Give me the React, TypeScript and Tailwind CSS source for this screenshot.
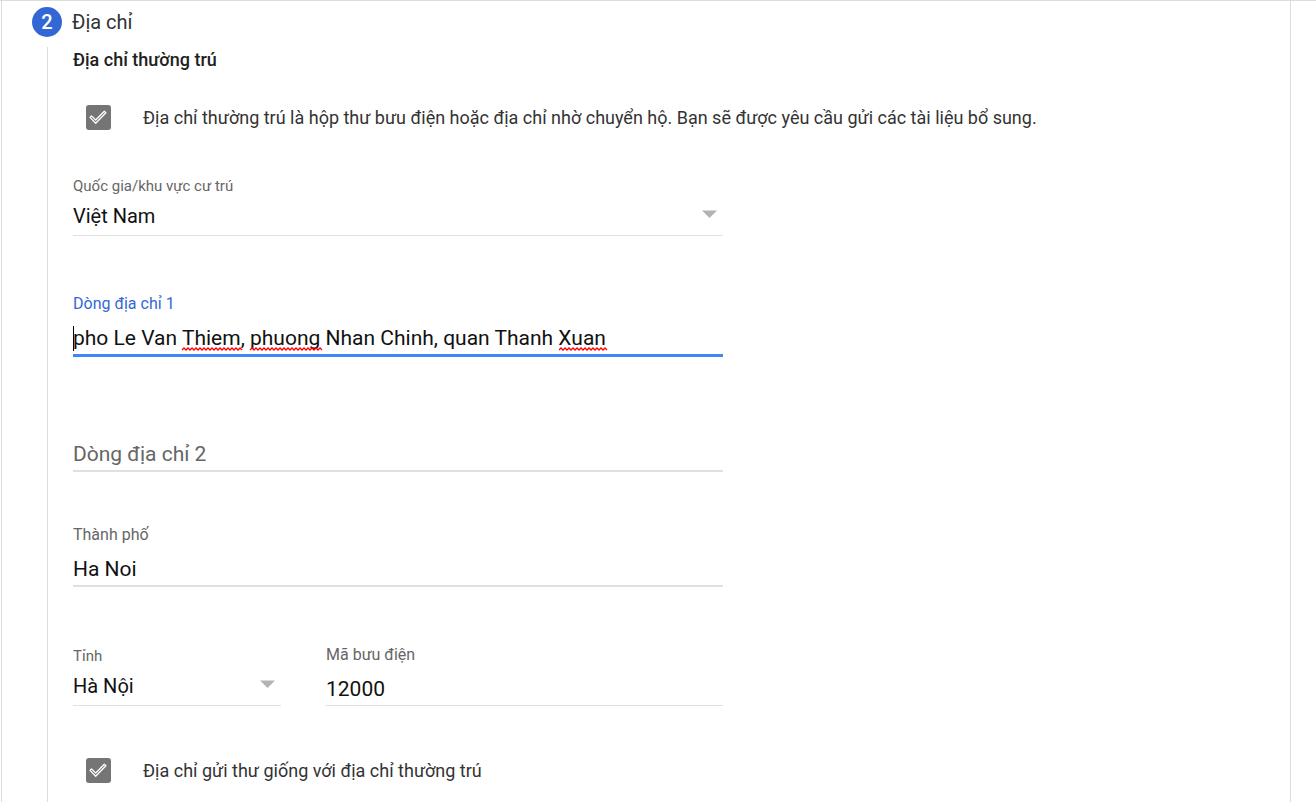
import { useState } from "react";
import clsx from "clsx";

type SelectFieldProps = {
    id: string;
    label: string;
    options: string[];
    className?: string;
};

function SelectField({ id, label, options, className }: SelectFieldProps) {
    return (
        <div className={className}>
            <label htmlFor={id} className="block text-[15px] leading-5 text-[#666]">
                {label}
            </label>
            <div className="relative">
                <select
                    id={id}
                    className="block h-10 w-full appearance-none border-b border-[#e0e0e0] bg-transparent pr-8 text-[20px] text-[#111] outline-none"
                >
                    {options.map((option) => (
                        <option key={option}>{option}</option>
                    ))}
                </select>
                <svg
                    viewBox="0 0 16 8"
                    className="pointer-events-none absolute top-3.5 right-[5px] h-2 w-4"
                    aria-hidden="true"
                >
                    <path d="M0 0.5h15l-7.5 7.5z" fill="#b3b3b3" />
                </svg>
            </div>
        </div>
    );
}

type CheckFieldProps = {
    id: string;
    label: string;
    className?: string;
};

function CheckField({ id, label, className }: CheckFieldProps) {
    const [checked, setChecked] = useState(true);

    return (
        <div className={clsx("flex items-center gap-8 pl-[13px]", className)}>
            <div className="relative h-[25px] w-[25px] shrink-0">
                <input
                    id={id}
                    type="checkbox"
                    checked={checked}
                    onChange={(e) => setChecked(e.target.checked)}
                    className="block h-full w-full appearance-none rounded-[3px] border-2 border-[#757575] checked:bg-[#757575]"
                />
                {checked && (
                    <svg
                        viewBox="0 0 25 25"
                        className="pointer-events-none absolute inset-0 h-full w-full"
                        aria-hidden="true"
                    >
                        <path
                            d="M4 12.4 5.5 10.9 9.7 15 18.3 6.2 19.9 7.8 9.7 18.2z"
                            fill="none"
                            stroke="#fff"
                            strokeWidth="1.3"
                            strokeLinejoin="round"
                        />
                    </svg>
                )}
            </div>
            <label htmlFor={id} className="text-[18px] leading-[25px] text-[#333]">
                {label}
            </label>
        </div>
    );
}

// wavy line of the spell checker, one wave every 4px
function wave(from: number, to: number) {
    let d = `M${from} 28`;
    for (let x = from; x < to; x += 4) {
        d += "l2 -2l2 2";
    }
    return d;
}

const misspelled = [
    [109, 168],
    [177, 247],
    [486, 533],
];

const inputClass = "block h-8 w-full bg-transparent text-[21px] text-[#111] outline-none placeholder:text-[#666] placeholder:opacity-100";

export default function App() {
    const [line1, setLine1] = useState("pho Le Van Thiem, phuong Nhan Chinh, quan Thanh Xuan");
    const [touched, setTouched] = useState(false);

    return (
        <div className="flex min-h-screen flex-col border-t border-[#dadce0] bg-white font-[Roboto,sans-serif]">
            <main className="mr-[25px] ml-px flex flex-1 flex-col border-x border-[#dadce0] pl-[30px]">
                <header className="flex items-center gap-2.5 pt-1.5">
                    <span className="flex h-[30px] w-[30px] items-center justify-center rounded-full bg-[#3367d6] text-[20px] font-medium text-white">
                        2
                    </span>
                    <h1 className="text-[20px] leading-[30px] text-[#333]">Địa chỉ</h1>
                </header>

                <form className="mt-2.5 ml-[15px] flex-1 border-l border-[#dadce0] pl-[25px]">
                    <h2 className="text-[18px] leading-[26px] font-medium text-[#212121]">Địa chỉ thường trú</h2>

                    <CheckField
                        id="po-box"
                        label="Địa chỉ thường trú là hộp thư bưu điện hoặc địa chỉ nhờ chuyển hộ. Bạn sẽ được yêu cầu gửi các tài liệu bổ sung."
                        className="mt-8"
                    />

                    <div className="max-w-[650px]">
                        <SelectField
                            id="country"
                            label="Quốc gia/khu vực cư trú"
                            options={["Việt Nam"]}
                            className="mt-[46px] mb-[58px]"
                        />

                        {/* Address line 1, focused */}
                        <div>
                            <label htmlFor="line1" className="mb-2 block text-[16px] leading-5 text-[#3367d6]">
                                Dòng địa chỉ 1
                            </label>
                            <div className="relative border-b-3 border-[#4285f4]">
                                <input
                                    id="line1"
                                    type="text"
                                    value={line1}
                                    spellCheck={false}
                                    onChange={(e) => {
                                        setLine1(e.target.value);
                                        setTouched(true);
                                    }}
                                    className={inputClass}
                                />
                                {!touched && (
                                    <svg
                                        viewBox="0 0 650 32"
                                        className="pointer-events-none absolute top-0 left-0 h-8 w-[650px]"
                                        aria-hidden="true"
                                    >
                                        <path d="M0.5 4v25" stroke="#000" />
                                        {misspelled.map(([from, to]) => (
                                            <path
                                                key={from}
                                                d={wave(from, to)}
                                                fill="none"
                                                stroke="#f00"
                                                strokeWidth="1.3"
                                            />
                                        ))}
                                    </svg>
                                )}
                            </div>
                        </div>

                        {/* Address line 2 */}
                        <div className="mt-[81px] border-b-2 border-[#e0e0e0]">
                            <input
                                id="line2"
                                type="text"
                                aria-label="Dòng địa chỉ 2"
                                placeholder="Dòng địa chỉ 2"
                                className={inputClass}
                            />
                        </div>

                        {/* City */}
                        <div className="mt-[53px] border-b-2 border-[#e0e0e0]">
                            <label htmlFor="city" className="mb-2 block text-[16px] leading-5 text-[#666]">
                                Thành phố
                            </label>
                            <input id="city" type="text" defaultValue="Ha Noi" className={inputClass} />
                        </div>

                        {/* Province and postal code */}
                        <div className="mt-[58px] flex items-end gap-[45px]">
                            <SelectField id="province" label="Tỉnh" options={["Hà Nội"]} className="w-52" />
                            <div className="flex-1 border-b border-[#e0e0e0]">
                                <label htmlFor="zip" className="mb-2 block text-[16px] leading-5 text-[#666]">
                                    Mã bưu điện
                                </label>
                                <input id="zip" type="text" defaultValue="12000" className={inputClass} />
                            </div>
                        </div>
                    </div>

                    <CheckField
                        id="same-address"
                        label="Địa chỉ gửi thư giống với địa chỉ thường trú"
                        className="mt-[52px]"
                    />
                </form>
            </main>
        </div>
    );
}
